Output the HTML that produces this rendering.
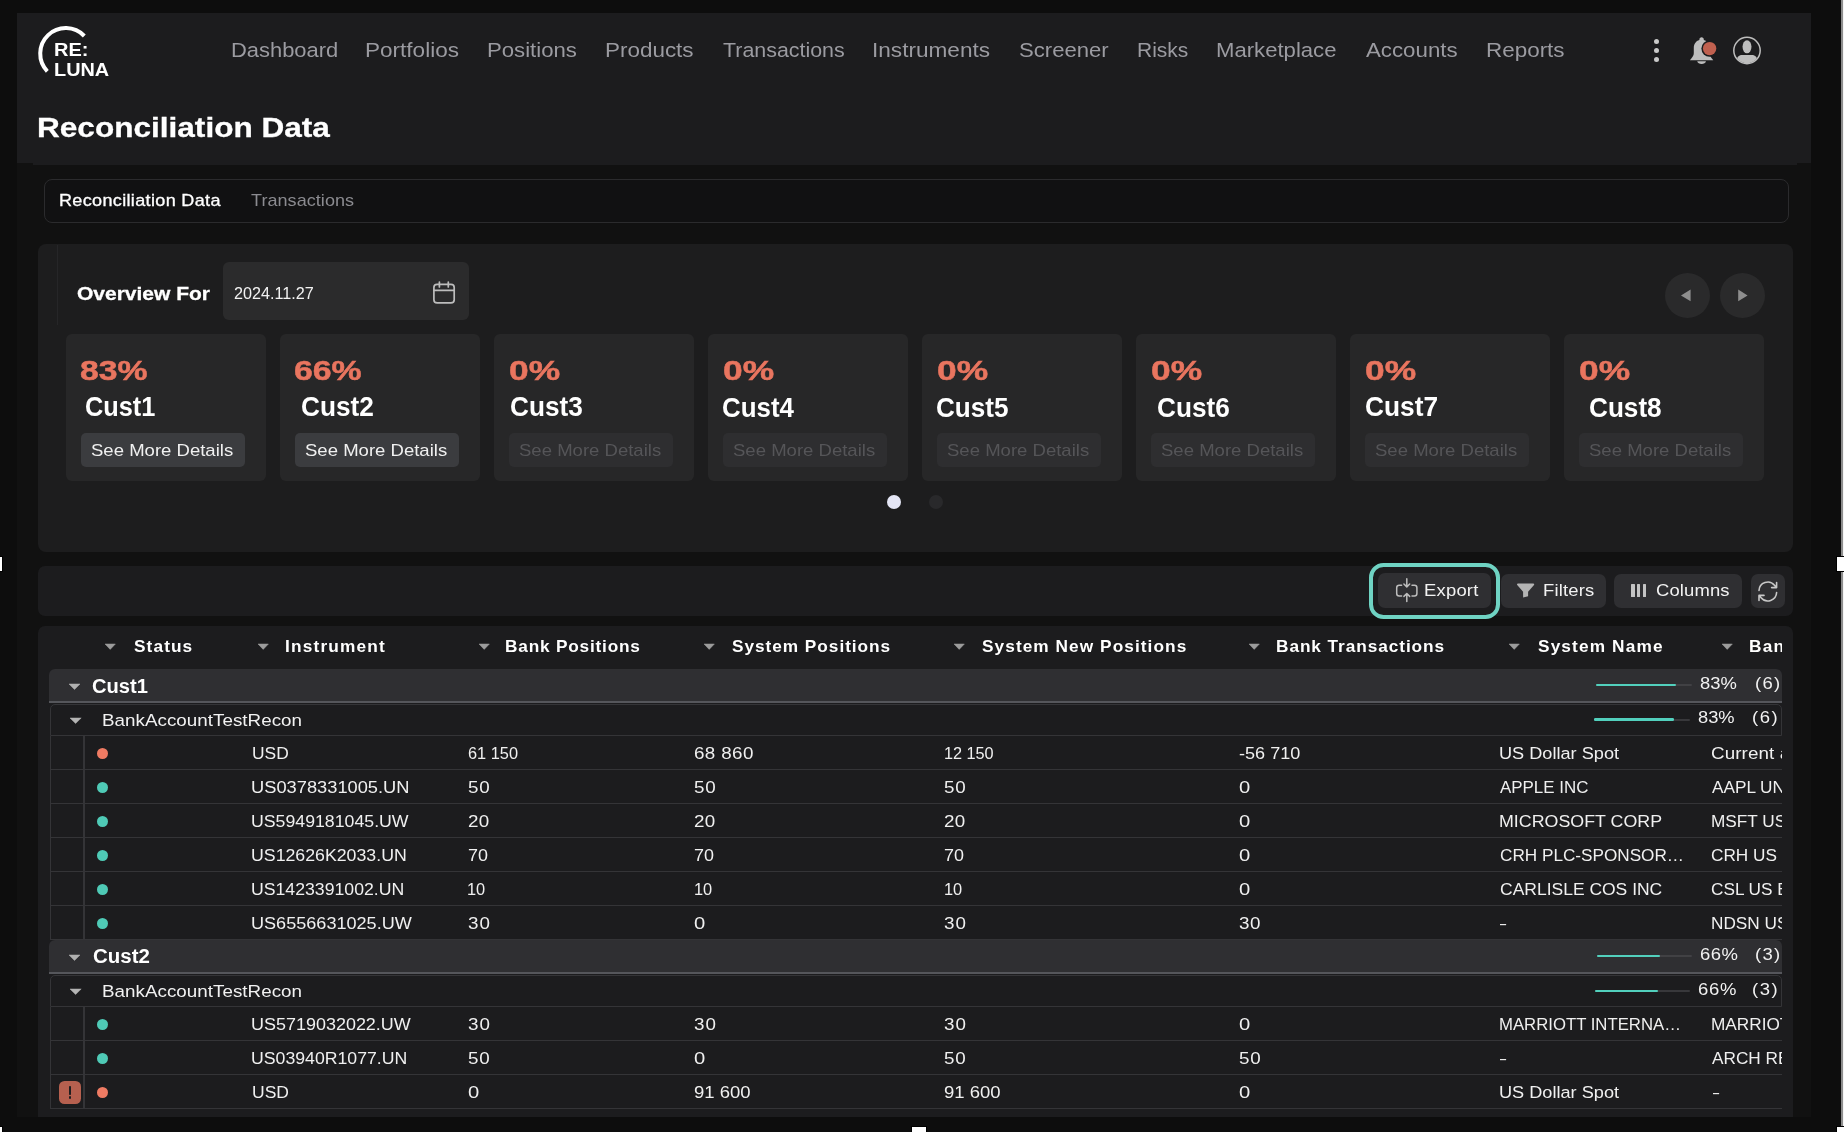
<!DOCTYPE html>
<html><head><meta charset="utf-8"><title>Reconciliation Data</title>
<style>
html,body{margin:0;padding:0;background:#0d0d0d;}
body{width:1844px;height:1132px;overflow:hidden;will-change:transform;background:#0d0d0d;font-family:"Liberation Sans",sans-serif;position:relative;}
body div,body span.t,body svg{position:absolute;}
.t{white-space:nowrap;line-height:0;display:block;transform-origin:0 0;}
.clip{overflow:hidden;}
</style></head><body>
<div style="left:17px;top:163px;width:1794px;height:954px;background:#111111;"></div>
<div style="left:17px;top:13px;width:1794px;height:150px;background:#1c1c1e;"></div>
<div style="left:33px;top:162px;width:1764px;height:2.8px;background:#1c1c1e;"></div>
<div style="left:1841px;top:0px;width:2px;height:1132px;background:#8e8e8e;"></div>
<div style="left:1843px;top:0px;width:1px;height:1132px;background:#f4f4f4;"></div>
<svg style="left:30px;top:18px" width="100" height="70" viewBox="30 18 100 70"><path d="M 84.3 36.0 A 25.3 25.3 0 0 0 47.3 71.3" fill="none" stroke="#fff" stroke-width="4"/></svg>
<span class="t" style="left:53.67px;top:50px;font-size:18.8px;font-weight:700;color:#fff;transform:scaleX(1.0630);">RE:</span>
<span class="t" style="left:53.68px;top:70px;font-size:18.8px;font-weight:700;color:#fff;transform:scaleX(1.0574);">LUNA</span>
<span class="t" style="left:230.84px;top:50px;font-size:20.5px;color:#9b9ba1;transform:scaleX(1.0693);">Dashboard</span>
<span class="t" style="left:364.99px;top:50px;font-size:20.5px;color:#9b9ba1;transform:scaleX(1.0999);">Portfolios</span>
<span class="t" style="left:487.02px;top:50px;font-size:20.5px;color:#9b9ba1;transform:scaleX(1.0810);">Positions</span>
<span class="t" style="left:604.99px;top:50px;font-size:20.5px;color:#9b9ba1;transform:scaleX(1.0948);">Products</span>
<span class="t" style="left:722.93px;top:50px;font-size:20.5px;color:#9b9ba1;transform:scaleX(1.0437);">Transactions</span>
<span class="t" style="left:871.86px;top:50px;font-size:20.5px;color:#9b9ba1;transform:scaleX(1.1028);">Instruments</span>
<span class="t" style="left:1018.83px;top:50px;font-size:20.5px;color:#9b9ba1;transform:scaleX(1.0787);">Screener</span>
<span class="t" style="left:1136.61px;top:50px;font-size:20.5px;color:#9b9ba1;transform:scaleX(1.0220);">Risks</span>
<span class="t" style="left:1216.22px;top:50px;font-size:20.5px;color:#9b9ba1;transform:scaleX(1.0788);">Marketplace</span>
<span class="t" style="left:1365.80px;top:50px;font-size:20.5px;color:#9b9ba1;transform:scaleX(1.0861);">Accounts</span>
<span class="t" style="left:1485.99px;top:50px;font-size:20.5px;color:#9b9ba1;transform:scaleX(1.0943);">Reports</span>
<div style="left:1654.15px;top:39.15px;width:4.7px;height:4.7px;background:#c9c9c9;border-radius:3px;"></div>
<div style="left:1654.15px;top:48.25px;width:4.7px;height:4.7px;background:#c9c9c9;border-radius:3px;"></div>
<div style="left:1654.15px;top:57.449999999999996px;width:4.7px;height:4.7px;background:#c9c9c9;border-radius:3px;"></div>
<svg style="left:1686px;top:34px" width="34" height="34" viewBox="1686 34 34 34">
<path d="M1701.6 37.2c-1.3 0-2.2 1-2.2 2.2v.5c-3.6 1-5.6 4.1-5.6 8v5.3c0 2.2-1.5 4.2-3.9 7h23.4c-2.4-2.8-3.9-4.8-3.9-7v-5.3c0-3.9-2-7-5.6-8v-.5c0-1.200-.9-2.200-2.200-2.200z" fill="#bdbdbd"/>
<path d="M1697.200 61.300h8.800c-.5 1.700-2.200 2.700-4.400 2.700s-3.900-1-4.400-2.700z" fill="#bdbdbd"/>
<circle cx="1709.6" cy="48.600" r="8.200" fill="#1c1c1e"/>
<circle cx="1709.6" cy="48.600" r="6.700" fill="#c0604f"/>
</svg>
<svg style="left:1730px;top:34px" width="34" height="34" viewBox="1730 34 34 34">
<defs><clipPath id="uc"><circle cx="1747" cy="50.500" r="12.600"/></clipPath></defs>
<circle cx="1747" cy="50.500" r="13.200" fill="none" stroke="#bdbdbd" stroke-width="1.500"/>
<ellipse cx="1747" cy="46.800" rx="4.500" ry="6.500" fill="#bdbdbd"/>
<path d="M1737 64 v-4.500 c0-3 2.500-4.500 5-4.500 h10 c2.500 0 5 1.500 5 4.500 v4.500z" fill="#bdbdbd" clip-path="url(#uc)"/>
</svg>
<span class="t" style="left:37.14px;top:128px;font-size:27.6px;font-weight:700;color:#fff;transform:scaleX(1.1438);-webkit-text-stroke:0.3px #fff;">Reconciliation Data</span>
<div style="left:44px;top:179px;width:1745px;height:43.5px;background:#111112;border-radius:8px;box-sizing:border-box;border:1px solid #2b2b2d;"></div>
<span class="t" style="left:59.26px;top:201px;font-size:15.7px;color:#fff;letter-spacing:0.292px;transform:scaleX(1.1500);-webkit-text-stroke:0.3px #fff;">Reconciliation Data</span>
<span class="t" style="left:250.60px;top:201px;font-size:15.7px;color:#8b8b90;letter-spacing:0.035px;transform:scaleX(1.1500);">Transactions</span>
<div style="left:38px;top:244px;width:1755px;height:307.5px;background:#1d1d1e;border-radius:8px;"></div>
<div style="left:57px;top:245px;width:1px;height:80px;background:#262628;"></div>
<span class="t" style="left:76.95px;top:294px;font-size:18.6px;font-weight:700;color:#fff;transform:scaleX(1.1288);-webkit-text-stroke:0.3px #fff;">Overview For</span>
<div style="left:222.5px;top:261.7px;width:246.5px;height:58.3px;background:#2b2b2c;border-radius:6px;"></div>
<span class="t" style="left:234.11px;top:293px;font-size:16.5px;color:#f2f2f2;transform:scaleX(0.9818);">2024.11.27</span>
<svg style="left:430px;top:279px" width="28" height="28" viewBox="430 279 28 28" fill="none" stroke="#bdbdbd" stroke-width="1.700" stroke-linecap="round">
<rect x="433.900" y="284.400" width="20.300" height="18.500" rx="3.200"/>
<path d="M433.900 290.400h20.300M439.400 282v5M448.300 282v5"/>
</svg>
<div style="left:1665.1px;top:272.8px;width:45.0px;height:45.0px;background:#2a2a2b;border-radius:23px;"></div>
<div style="left:1719.6px;top:272.8px;width:45.0px;height:45.0px;background:#2a2a2b;border-radius:23px;"></div>
<svg style="left:1660px;top:270px" width="110" height="50" viewBox="1660 270 110 50"><path d="M1681 295.400 L1690.600 289.600 V301.300z M1747.600 295.400 L1738.200 289.600 V301.300z" fill="#8e8e8e"/></svg>
<div style="left:66.2px;top:334.3px;width:200.2px;height:146.4px;background:#272728;border-radius:6px;"></div>
<span class="t" style="left:80.18px;top:371px;font-size:28px;font-weight:700;color:#e9755f;transform:scaleX(1.2037);-webkit-text-stroke:0.5px #e9755f;">83%</span>
<span class="t" style="left:85.37px;top:407px;font-size:27px;font-weight:700;color:#fff;transform:scaleX(0.9385);">Cust1</span>
<div style="left:80.60000000000001px;top:433.1px;width:164.9px;height:33.8px;background:#3b3c3f;border-radius:5px;"></div>
<span class="t" style="left:91.28px;top:451px;font-size:17px;color:#f0f0f0;transform:scaleX(1.0903);">See More Details</span>
<div style="left:280.2px;top:334.3px;width:200.2px;height:146.4px;background:#272728;border-radius:6px;"></div>
<span class="t" style="left:293.99px;top:371px;font-size:28px;font-weight:700;color:#e9755f;transform:scaleX(1.2070);-webkit-text-stroke:0.5px #e9755f;">66%</span>
<span class="t" style="left:301.33px;top:407px;font-size:27px;font-weight:700;color:#fff;transform:scaleX(0.9719);">Cust2</span>
<div style="left:294.59999999999997px;top:433.1px;width:164.9px;height:33.8px;background:#3b3c3f;border-radius:5px;"></div>
<span class="t" style="left:305.28px;top:451px;font-size:17px;color:#f0f0f0;transform:scaleX(1.0903);">See More Details</span>
<div style="left:494.2px;top:334.3px;width:200.2px;height:146.4px;background:#272728;border-radius:6px;"></div>
<span class="t" style="left:508.51px;top:371px;font-size:28px;font-weight:700;color:#e9755f;transform:scaleX(1.2626);-webkit-text-stroke:0.5px #e9755f;">0%</span>
<span class="t" style="left:509.63px;top:407px;font-size:27px;font-weight:700;color:#fff;transform:scaleX(0.9705);">Cust3</span>
<div style="left:508.59999999999997px;top:433.1px;width:164.9px;height:33.8px;background:#2e2e30;border-radius:5px;"></div>
<span class="t" style="left:519.28px;top:451px;font-size:17px;color:#555558;transform:scaleX(1.0903);">See More Details</span>
<div style="left:708.2px;top:334.3px;width:200.2px;height:146.4px;background:#272728;border-radius:6px;"></div>
<span class="t" style="left:722.51px;top:371px;font-size:28px;font-weight:700;color:#e9755f;transform:scaleX(1.2626);-webkit-text-stroke:0.5px #e9755f;">0%</span>
<span class="t" style="left:722.24px;top:408px;font-size:27px;font-weight:700;color:#fff;transform:scaleX(0.9593);">Cust4</span>
<div style="left:722.6px;top:433.1px;width:164.9px;height:33.8px;background:#2e2e30;border-radius:5px;"></div>
<span class="t" style="left:733.28px;top:451px;font-size:17px;color:#555558;transform:scaleX(1.0903);">See More Details</span>
<div style="left:922.2px;top:334.3px;width:200.2px;height:146.4px;background:#272728;border-radius:6px;"></div>
<span class="t" style="left:936.51px;top:371px;font-size:28px;font-weight:700;color:#e9755f;transform:scaleX(1.2626);-webkit-text-stroke:0.5px #e9755f;">0%</span>
<span class="t" style="left:935.84px;top:408px;font-size:27px;font-weight:700;color:#fff;transform:scaleX(0.9672);">Cust5</span>
<div style="left:936.6px;top:433.1px;width:164.9px;height:33.8px;background:#2e2e30;border-radius:5px;"></div>
<span class="t" style="left:947.28px;top:451px;font-size:17px;color:#555558;transform:scaleX(1.0903);">See More Details</span>
<div style="left:1136.2px;top:334.3px;width:200.2px;height:146.4px;background:#272728;border-radius:6px;"></div>
<span class="t" style="left:1150.51px;top:371px;font-size:28px;font-weight:700;color:#e9755f;transform:scaleX(1.2626);-webkit-text-stroke:0.5px #e9755f;">0%</span>
<span class="t" style="left:1157.33px;top:408px;font-size:27px;font-weight:700;color:#fff;transform:scaleX(0.9705);">Cust6</span>
<div style="left:1150.6000000000001px;top:433.1px;width:164.9px;height:33.8px;background:#2e2e30;border-radius:5px;"></div>
<span class="t" style="left:1161.28px;top:451px;font-size:17px;color:#555558;transform:scaleX(1.0903);">See More Details</span>
<div style="left:1350.2px;top:334.3px;width:200.2px;height:146.4px;background:#272728;border-radius:6px;"></div>
<span class="t" style="left:1364.51px;top:371px;font-size:28px;font-weight:700;color:#e9755f;transform:scaleX(1.2626);-webkit-text-stroke:0.5px #e9755f;">0%</span>
<span class="t" style="left:1365.33px;top:407px;font-size:27px;font-weight:700;color:#fff;transform:scaleX(0.9732);">Cust7</span>
<div style="left:1364.6000000000001px;top:433.1px;width:164.9px;height:33.8px;background:#2e2e30;border-radius:5px;"></div>
<span class="t" style="left:1375.28px;top:451px;font-size:17px;color:#555558;transform:scaleX(1.0903);">See More Details</span>
<div style="left:1564.2px;top:334.3px;width:200.2px;height:146.4px;background:#272728;border-radius:6px;"></div>
<span class="t" style="left:1578.51px;top:371px;font-size:28px;font-weight:700;color:#e9755f;transform:scaleX(1.2626);-webkit-text-stroke:0.5px #e9755f;">0%</span>
<span class="t" style="left:1589.33px;top:408px;font-size:27px;font-weight:700;color:#fff;transform:scaleX(0.9685);">Cust8</span>
<div style="left:1578.6000000000001px;top:433.1px;width:164.9px;height:33.8px;background:#2e2e30;border-radius:5px;"></div>
<span class="t" style="left:1589.28px;top:451px;font-size:17px;color:#555558;transform:scaleX(1.0903);">See More Details</span>
<div style="left:887px;top:495.1px;width:14px;height:14.0px;background:#e4e6f5;border-radius:7px;"></div>
<div style="left:929.2px;top:495.1px;width:14.0px;height:14.0px;background:#29292b;border-radius:7px;"></div>
<div style="left:38px;top:566px;width:1755px;height:50.4px;background:#1c1c1e;border-radius:7px;"></div>
<div style="left:1369px;top:563px;width:131.3px;height:55.8px;background:#1c1c1e;border-radius:14.5px;box-sizing:border-box;border:4.8px solid #6fd3c3;"></div>
<div style="left:1378.2px;top:572.8px;width:112.6px;height:35.5px;background:#2f2f32;border-radius:7px;"></div>
<div style="left:1501.4px;top:574.3px;width:104.6px;height:34.0px;background:#2f2f32;border-radius:7px;"></div>
<div style="left:1614.1px;top:574.3px;width:128.0px;height:34.0px;background:#2f2f32;border-radius:7px;"></div>
<div style="left:1751px;top:574.3px;width:33.8px;height:34.0px;background:#2f2f32;border-radius:7px;"></div>
<svg style="left:1392px;top:575px" width="30" height="30" viewBox="1392 575 30 30" fill="none" stroke="#bdbdbd" stroke-width="1.500" stroke-linecap="round" stroke-linejoin="round">
<path d="M1401.600 585.300h-2.400a2.500 2.500 0 0 0-2.500 2.500v5.600a2.500 2.500 0 0 0 2.500 2.500h2.400M1412 585.300h2.400a2.500 2.500 0 0 1 2.500 2.500v5.600a2.500 2.500 0 0 1-2.500 2.500h-2.400"/>
<path d="M1406.800 578.700v8.000M1403.900 584.000l2.900 2.900 2.900-2.900M1406.800 601.600v-8.000M1403.900 596.400l2.900-2.900 2.900 2.900"/>
</svg>
<span class="t" style="left:1423.99px;top:591px;font-size:15.9px;color:#f2f2f2;letter-spacing:0.183px;transform:scaleX(1.1600);">Export</span>
<svg style="left:1514px;top:580px" width="24" height="22" viewBox="1514 580 24 22"><path d="M1517.800 583.600h15.600a.8.8 0 0 1 .6 1.300l-5.900 6.800v4.600l-5 1.200v-5.800l-5.900-6.800a.8.8 0 0 1 .6-1.300z" fill="#b4b4b4"/></svg>
<span class="t" style="left:1542.69px;top:591px;font-size:15.9px;color:#f2f2f2;letter-spacing:0.161px;transform:scaleX(1.1600);">Filters</span>
<div style="left:1631.4px;top:583.7px;width:3.4px;height:13.7px;background:#c4c4c4;border-radius:0.5px;"></div>
<div style="left:1637.1px;top:583.7px;width:3.4px;height:13.7px;background:#c4c4c4;border-radius:0.5px;"></div>
<div style="left:1642.8px;top:583.7px;width:3.4px;height:13.7px;background:#c4c4c4;border-radius:0.5px;"></div>
<span class="t" style="left:1656.27px;top:591px;font-size:15.9px;color:#f2f2f2;letter-spacing:0.111px;transform:scaleX(1.1600);">Columns</span>
<svg style="left:1755px;top:579px" width="26" height="26" viewBox="1755 579 26 26" fill="none" stroke="#c8c8c8" stroke-width="1.600" stroke-linecap="round" stroke-linejoin="round">
<path d="M1759 590.500a8.800 8.800 0 0 1 15.500-5.300l2 2.300M1776.600 582.600v5h-5"/>
<path d="M1776.600 592.500a8.800 8.800 0 0 1-15.500 5.300l-2-2.300M1759 600.400v-5h5"/>
</svg>
<div style="left:38.3px;top:625.6px;width:1754.7px;height:491.4px;background:#1c1c1e;border-radius:7px 7px 0 0;"></div>
<div class="clip" style="left:0;top:0;width:1782px;height:1132px">
<svg style="left:104.40px;top:643.20px" width="12.4" height="7.4" viewBox="-1 -1 12.4 7.4"><path d="M0 0H10.4L5.2 5.4z" fill="#9c9c9c" stroke="#9c9c9c" stroke-width="0.500" stroke-linejoin="round"/></svg>
<span class="t" style="left:134.23px;top:647px;font-size:16.6px;font-weight:700;color:#fff;letter-spacing:1.051px;transform:scaleX(1.0400);">Status</span>
<svg style="left:257.00px;top:643.20px" width="12.4" height="7.4" viewBox="-1 -1 12.4 7.4"><path d="M0 0H10.4L5.2 5.4z" fill="#9c9c9c" stroke="#9c9c9c" stroke-width="0.500" stroke-linejoin="round"/></svg>
<span class="t" style="left:284.96px;top:647px;font-size:16.6px;font-weight:700;color:#fff;letter-spacing:1.135px;transform:scaleX(1.0400);">Instrument</span>
<svg style="left:478.20px;top:643.20px" width="12.4" height="7.4" viewBox="-1 -1 12.4 7.4"><path d="M0 0H10.4L5.2 5.4z" fill="#9c9c9c" stroke="#9c9c9c" stroke-width="0.500" stroke-linejoin="round"/></svg>
<span class="t" style="left:504.86px;top:647px;font-size:16.6px;font-weight:700;color:#fff;letter-spacing:0.760px;transform:scaleX(1.0400);">Bank Positions</span>
<svg style="left:703.40px;top:643.20px" width="12.4" height="7.4" viewBox="-1 -1 12.4 7.4"><path d="M0 0H10.4L5.2 5.4z" fill="#9c9c9c" stroke="#9c9c9c" stroke-width="0.500" stroke-linejoin="round"/></svg>
<span class="t" style="left:731.83px;top:647px;font-size:16.6px;font-weight:700;color:#fff;letter-spacing:0.917px;transform:scaleX(1.0400);">System Positions</span>
<svg style="left:952.50px;top:643.20px" width="12.4" height="7.4" viewBox="-1 -1 12.4 7.4"><path d="M0 0H10.4L5.2 5.4z" fill="#9c9c9c" stroke="#9c9c9c" stroke-width="0.500" stroke-linejoin="round"/></svg>
<span class="t" style="left:982.33px;top:647px;font-size:16.6px;font-weight:700;color:#fff;letter-spacing:1.018px;transform:scaleX(1.0400);">System New Positions</span>
<svg style="left:1248.00px;top:643.20px" width="12.4" height="7.4" viewBox="-1 -1 12.4 7.4"><path d="M0 0H10.4L5.2 5.4z" fill="#9c9c9c" stroke="#9c9c9c" stroke-width="0.500" stroke-linejoin="round"/></svg>
<span class="t" style="left:1276.46px;top:647px;font-size:16.6px;font-weight:700;color:#fff;letter-spacing:0.881px;transform:scaleX(1.0400);">Bank Transactions</span>
<svg style="left:1508.00px;top:643.20px" width="12.4" height="7.4" viewBox="-1 -1 12.4 7.4"><path d="M0 0H10.4L5.2 5.4z" fill="#9c9c9c" stroke="#9c9c9c" stroke-width="0.500" stroke-linejoin="round"/></svg>
<span class="t" style="left:1537.53px;top:647px;font-size:16.6px;font-weight:700;color:#fff;letter-spacing:1.085px;transform:scaleX(1.0400);">System Name</span>
<svg style="left:1721.00px;top:643.20px" width="12.4" height="7.4" viewBox="-1 -1 12.4 7.4"><path d="M0 0H10.4L5.2 5.4z" fill="#9c9c9c" stroke="#9c9c9c" stroke-width="0.500" stroke-linejoin="round"/></svg>
<span class="t" style="left:1748.56px;top:647px;font-size:16.6px;font-weight:700;color:#fff;letter-spacing:1.200px;transform:scaleX(1.0400);">Bank Name</span>
<div style="left:49px;top:669px;width:1733px;height:31.6px;background:#2f2f32;border-radius:6px 6px 0 0;"></div>
<div style="left:49px;top:700.6px;width:1733px;height:2.1px;background:#55565b;"></div>
<svg style="left:67.60px;top:682.50px" width="13" height="7.5" viewBox="-1 -1 13 7.5"><path d="M0 0H11L5.5 5.5z" fill="#b0b0b0" stroke="#b0b0b0" stroke-width="0.500" stroke-linejoin="round"/></svg>
<span class="t" style="left:92.01px;top:686px;font-size:20.3px;font-weight:700;color:#fff;transform:scaleX(0.9918);">Cust1</span>
<div style="left:1596.3px;top:684.2px;width:96.0px;height:2.0px;background:#414144;border-radius:1px;"></div>
<div style="left:1596.3px;top:684.0px;width:79.97px;height:2.4px;background:#52d0bd;border-radius:1.2px;"></div>
<span class="t" style="left:1699.62px;top:683px;font-size:16.5px;color:#f2f2f2;transform:scaleX(1.1150);">83%</span>
<span class="t" style="left:1754.68px;top:683px;font-size:16.5px;color:#f2f2f2;letter-spacing:1.148px;transform:scaleX(1.1200);">(6)</span>
<div style="left:50.2px;top:704.2px;width:1731.8px;height:31.8px;background:transparent;box-sizing:border-box;border:1.2px solid #343437;border-radius:5px 5px 0 0;"></div>
<svg style="left:69.10px;top:716.60px" width="13.2" height="7.5" viewBox="-1 -1 13.2 7.5"><path d="M0 0H11.2L5.6 5.5z" fill="#b4b4b4" stroke="#b4b4b4" stroke-width="0.500" stroke-linejoin="round"/></svg>
<span class="t" style="left:101.89px;top:721px;font-size:16.8px;color:#f2f2f2;letter-spacing:0.023px;transform:scaleX(1.1200);">BankAccountTestRecon</span>
<div style="left:1594px;top:718.6px;width:96px;height:2.0px;background:#38383b;border-radius:1px;"></div>
<div style="left:1594px;top:718.4000000000001px;width:79.97px;height:2.4px;background:#52d0bd;border-radius:1.2px;"></div>
<span class="t" style="left:1697.62px;top:717px;font-size:16.5px;color:#f2f2f2;transform:scaleX(1.1087);">83%</span>
<span class="t" style="left:1752.18px;top:717px;font-size:16.5px;color:#f2f2f2;letter-spacing:1.371px;transform:scaleX(1.1200);">(6)</span>
<div style="left:50.2px;top:735.8px;width:1.2px;height:204.0px;background:#343437;"></div>
<div style="left:83.2px;top:735.8px;width:1.6px;height:204.0px;background:#343437;"></div>
<div style="left:50.2px;top:768.8px;width:1731.8px;height:1.2px;background:#343437;"></div>
<div style="left:96.60000000000001px;top:747.8px;width:11.2px;height:11.2px;background:#ef7b63;border-radius:6px;"></div>
<span class="t" style="left:251.50px;top:754px;font-size:16.8px;color:#f0f0f0;transform:scaleX(1.0374);">USD</span>
<span class="t" style="left:467.77px;top:754px;font-size:16.8px;color:#f0f0f0;transform:scaleX(0.9739);">61 150</span>
<span class="t" style="left:693.95px;top:754px;font-size:16.8px;color:#f0f0f0;letter-spacing:0.341px;transform:scaleX(1.1200);">68 860</span>
<span class="t" style="left:943.59px;top:754px;font-size:16.8px;color:#f0f0f0;letter-spacing:-0.044px;transform:scaleX(0.9700);">12 150</span>
<span class="t" style="left:1239.15px;top:754px;font-size:16.8px;color:#f0f0f0;transform:scaleX(1.0764);">-56 710</span>
<span class="t" style="left:1499.05px;top:754px;font-size:16.8px;color:#f0f0f0;transform:scaleX(1.0815);">US Dollar Spot</span>
<span class="t" style="left:1711.35px;top:754px;font-size:16.8px;color:#f0f0f0;letter-spacing:0.100px;transform:scaleX(1.1200);">Current account</span>
<div style="left:50.2px;top:802.8px;width:1731.8px;height:1.2px;background:#343437;"></div>
<div style="left:96.60000000000001px;top:781.8px;width:11.2px;height:11.2px;background:#4fcab6;border-radius:6px;"></div>
<span class="t" style="left:251.44px;top:788px;font-size:16.8px;color:#f0f0f0;transform:scaleX(1.0891);">US0378331005.UN</span>
<span class="t" style="left:467.87px;top:788px;font-size:16.8px;color:#f0f0f0;letter-spacing:0.814px;transform:scaleX(1.1200);">50</span>
<span class="t" style="left:694.17px;top:788px;font-size:16.8px;color:#f0f0f0;letter-spacing:0.814px;transform:scaleX(1.1200);">50</span>
<span class="t" style="left:944.07px;top:788px;font-size:16.8px;color:#f0f0f0;letter-spacing:0.814px;transform:scaleX(1.1200);">50</span>
<span class="t" style="left:1239.12px;top:788px;font-size:16.8px;color:#f0f0f0;transform:scaleX(1.2050);">0</span>
<span class="t" style="left:1500.40px;top:788px;font-size:16.8px;color:#f0f0f0;transform:scaleX(1.0086);">APPLE INC</span>
<span class="t" style="left:1712.30px;top:788px;font-size:16.8px;color:#f0f0f0;transform:scaleX(1.0250);">AAPL UN Equity</span>
<div style="left:50.2px;top:836.8px;width:1731.8px;height:1.2px;background:#343437;"></div>
<div style="left:96.60000000000001px;top:815.8px;width:11.2px;height:11.2px;background:#4fcab6;border-radius:6px;"></div>
<span class="t" style="left:251.48px;top:822px;font-size:16.8px;color:#f0f0f0;transform:scaleX(1.0557);">US5949181045.UW</span>
<span class="t" style="left:467.70px;top:822px;font-size:16.8px;color:#f0f0f0;letter-spacing:0.250px;transform:scaleX(1.1200);">20</span>
<span class="t" style="left:694.00px;top:822px;font-size:16.8px;color:#f0f0f0;letter-spacing:0.250px;transform:scaleX(1.1200);">20</span>
<span class="t" style="left:943.90px;top:822px;font-size:16.8px;color:#f0f0f0;letter-spacing:0.250px;transform:scaleX(1.1200);">20</span>
<span class="t" style="left:1239.12px;top:822px;font-size:16.8px;color:#f0f0f0;transform:scaleX(1.2050);">0</span>
<span class="t" style="left:1498.97px;top:822px;font-size:16.8px;color:#f0f0f0;transform:scaleX(1.0620);">MICROSOFT CORP</span>
<span class="t" style="left:1710.92px;top:822px;font-size:16.8px;color:#f0f0f0;transform:scaleX(1.0250);">MSFT US Equity</span>
<div style="left:50.2px;top:870.8px;width:1731.8px;height:1.2px;background:#343437;"></div>
<div style="left:96.60000000000001px;top:849.8px;width:11.2px;height:11.2px;background:#4fcab6;border-radius:6px;"></div>
<span class="t" style="left:251.48px;top:856px;font-size:16.8px;color:#f0f0f0;transform:scaleX(1.0566);">US12626K2033.UN</span>
<span class="t" style="left:467.69px;top:856px;font-size:16.8px;color:#f0f0f0;transform:scaleX(1.0698);">70</span>
<span class="t" style="left:693.99px;top:856px;font-size:16.8px;color:#f0f0f0;transform:scaleX(1.0698);">70</span>
<span class="t" style="left:943.89px;top:856px;font-size:16.8px;color:#f0f0f0;transform:scaleX(1.0698);">70</span>
<span class="t" style="left:1239.12px;top:856px;font-size:16.8px;color:#f0f0f0;transform:scaleX(1.2050);">0</span>
<span class="t" style="left:1499.53px;top:856px;font-size:16.8px;color:#f0f0f0;transform:scaleX(1.0223);">CRH PLC-SPONSOR…</span>
<span class="t" style="left:1711.43px;top:856px;font-size:16.8px;color:#f0f0f0;transform:scaleX(1.0250);">CRH US Equity</span>
<div style="left:50.2px;top:904.8px;width:1731.8px;height:1.2px;background:#343437;"></div>
<div style="left:96.60000000000001px;top:883.8px;width:11.2px;height:11.2px;background:#4fcab6;border-radius:6px;"></div>
<span class="t" style="left:251.48px;top:890px;font-size:16.8px;color:#f0f0f0;transform:scaleX(1.0527);">US1423391002.UN</span>
<span class="t" style="left:467.38px;top:890px;font-size:16.8px;color:#f0f0f0;transform:scaleX(0.9762);">10</span>
<span class="t" style="left:693.68px;top:890px;font-size:16.8px;color:#f0f0f0;transform:scaleX(0.9762);">10</span>
<span class="t" style="left:943.58px;top:890px;font-size:16.8px;color:#f0f0f0;transform:scaleX(0.9762);">10</span>
<span class="t" style="left:1239.12px;top:890px;font-size:16.8px;color:#f0f0f0;transform:scaleX(1.2050);">0</span>
<span class="t" style="left:1499.51px;top:890px;font-size:16.8px;color:#f0f0f0;transform:scaleX(1.0418);">CARLISLE COS INC</span>
<span class="t" style="left:1711.43px;top:890px;font-size:16.8px;color:#f0f0f0;transform:scaleX(1.0250);">CSL US Equity</span>
<div style="left:50.2px;top:938.8px;width:1731.8px;height:1.2px;background:#343437;"></div>
<div style="left:96.60000000000001px;top:917.8px;width:11.2px;height:11.2px;background:#4fcab6;border-radius:6px;"></div>
<span class="t" style="left:251.45px;top:924px;font-size:16.8px;color:#f0f0f0;transform:scaleX(1.0773);">US6556631025.UW</span>
<span class="t" style="left:467.93px;top:924px;font-size:16.8px;color:#f0f0f0;letter-spacing:1.032px;transform:scaleX(1.1200);">30</span>
<span class="t" style="left:694.12px;top:924px;font-size:16.8px;color:#f0f0f0;transform:scaleX(1.2050);">0</span>
<span class="t" style="left:944.13px;top:924px;font-size:16.8px;color:#f0f0f0;letter-spacing:1.032px;transform:scaleX(1.1200);">30</span>
<span class="t" style="left:1239.23px;top:924px;font-size:16.8px;color:#f0f0f0;letter-spacing:0.407px;transform:scaleX(1.1200);">30</span>
<span class="t" style="left:1500.40px;top:924px;font-size:16.8px;color:#f0f0f0;transform:scaleX(0.6524);">–</span>
<span class="t" style="left:1710.92px;top:924px;font-size:16.8px;color:#f0f0f0;transform:scaleX(1.0250);">NDSN US Equity</span>
<div style="left:49px;top:940.1px;width:1733px;height:31.6px;background:#2f2f32;border-radius:6px 6px 0 0;"></div>
<div style="left:49px;top:971.7px;width:1733px;height:2.1px;background:#55565b;"></div>
<svg style="left:67.60px;top:953.60px" width="13" height="7.5" viewBox="-1 -1 13 7.5"><path d="M0 0H11L5.5 5.5z" fill="#b0b0b0" stroke="#b0b0b0" stroke-width="0.500" stroke-linejoin="round"/></svg>
<span class="t" style="left:92.79px;top:956px;font-size:20.3px;font-weight:700;color:#fff;transform:scaleX(1.0091);">Cust2</span>
<div style="left:1596.9px;top:955.3000000000001px;width:95.6px;height:2.0px;background:#414144;border-radius:1px;"></div>
<div style="left:1596.9px;top:955.1px;width:63.38px;height:2.4px;background:#52d0bd;border-radius:1.2px;"></div>
<span class="t" style="left:1699.80px;top:954px;font-size:16.5px;color:#f2f2f2;letter-spacing:0.425px;transform:scaleX(1.1200);">66%</span>
<span class="t" style="left:1754.98px;top:954px;font-size:16.5px;color:#f2f2f2;letter-spacing:1.104px;transform:scaleX(1.1200);">(3)</span>
<div style="left:50.2px;top:975.4px;width:1731.8px;height:31.8px;background:transparent;box-sizing:border-box;border:1.2px solid #343437;border-radius:5px 5px 0 0;"></div>
<svg style="left:69.10px;top:987.80px" width="13.2" height="7.5" viewBox="-1 -1 13.2 7.5"><path d="M0 0H11.2L5.6 5.5z" fill="#b4b4b4" stroke="#b4b4b4" stroke-width="0.500" stroke-linejoin="round"/></svg>
<span class="t" style="left:101.89px;top:992px;font-size:16.8px;color:#f2f2f2;letter-spacing:0.023px;transform:scaleX(1.1200);">BankAccountTestRecon</span>
<div style="left:1595px;top:989.8px;width:95.3px;height:2.0px;background:#38383b;border-radius:1px;"></div>
<div style="left:1595px;top:989.6px;width:63.18px;height:2.4px;background:#52d0bd;border-radius:1.2px;"></div>
<span class="t" style="left:1697.60px;top:989px;font-size:16.5px;color:#f2f2f2;letter-spacing:0.693px;transform:scaleX(1.1200);">66%</span>
<span class="t" style="left:1752.48px;top:989px;font-size:16.5px;color:#f2f2f2;letter-spacing:1.371px;transform:scaleX(1.1200);">(3)</span>
<div style="left:50.2px;top:1007.0px;width:1.2px;height:102.0px;background:#343437;"></div>
<div style="left:83.2px;top:1007.0px;width:1.6px;height:102.0px;background:#343437;"></div>
<div style="left:50.2px;top:1040.0px;width:1731.8px;height:1.2px;background:#343437;"></div>
<div style="left:96.60000000000001px;top:1018.9999999999999px;width:11.2px;height:11.2px;background:#4fcab6;border-radius:6px;"></div>
<span class="t" style="left:251.46px;top:1025px;font-size:16.8px;color:#f0f0f0;transform:scaleX(1.0705);">US5719032022.UW</span>
<span class="t" style="left:467.93px;top:1025px;font-size:16.8px;color:#f0f0f0;letter-spacing:1.032px;transform:scaleX(1.1200);">30</span>
<span class="t" style="left:694.23px;top:1025px;font-size:16.8px;color:#f0f0f0;letter-spacing:1.032px;transform:scaleX(1.1200);">30</span>
<span class="t" style="left:944.13px;top:1025px;font-size:16.8px;color:#f0f0f0;letter-spacing:1.032px;transform:scaleX(1.1200);">30</span>
<span class="t" style="left:1239.12px;top:1025px;font-size:16.8px;color:#f0f0f0;transform:scaleX(1.2050);">0</span>
<span class="t" style="left:1499.05px;top:1025px;font-size:16.8px;color:#f0f0f0;transform:scaleX(0.9969);">MARRIOTT INTERNA…</span>
<span class="t" style="left:1710.92px;top:1025px;font-size:16.8px;color:#f0f0f0;transform:scaleX(1.0250);">MARRIOTT INTL</span>
<div style="left:50.2px;top:1074.0px;width:1731.8px;height:1.2px;background:#343437;"></div>
<div style="left:96.60000000000001px;top:1053.0px;width:11.2px;height:11.2px;background:#4fcab6;border-radius:6px;"></div>
<span class="t" style="left:251.48px;top:1059px;font-size:16.8px;color:#f0f0f0;transform:scaleX(1.0535);">US03940R1077.UN</span>
<span class="t" style="left:467.87px;top:1059px;font-size:16.8px;color:#f0f0f0;letter-spacing:0.814px;transform:scaleX(1.1200);">50</span>
<span class="t" style="left:694.12px;top:1059px;font-size:16.8px;color:#f0f0f0;transform:scaleX(1.2050);">0</span>
<span class="t" style="left:944.07px;top:1059px;font-size:16.8px;color:#f0f0f0;letter-spacing:0.814px;transform:scaleX(1.1200);">50</span>
<span class="t" style="left:1239.17px;top:1059px;font-size:16.8px;color:#f0f0f0;letter-spacing:0.814px;transform:scaleX(1.1200);">50</span>
<span class="t" style="left:1500.40px;top:1059px;font-size:16.8px;color:#f0f0f0;transform:scaleX(0.6524);">–</span>
<span class="t" style="left:1712.30px;top:1059px;font-size:16.8px;color:#f0f0f0;transform:scaleX(1.0250);">ARCH RESOURCES</span>
<div style="left:50.2px;top:1108.0px;width:1731.8px;height:1.2px;background:#343437;"></div>
<div style="left:96.60000000000001px;top:1087.0px;width:11.2px;height:11.2px;background:#ef7b63;border-radius:6px;"></div>
<span class="t" style="left:251.50px;top:1093px;font-size:16.8px;color:#f0f0f0;transform:scaleX(1.0433);">USD</span>
<span class="t" style="left:467.82px;top:1093px;font-size:16.8px;color:#f0f0f0;transform:scaleX(1.2050);">0</span>
<span class="t" style="left:694.07px;top:1093px;font-size:16.8px;color:#f0f0f0;transform:scaleX(1.1040);">91 600</span>
<span class="t" style="left:943.97px;top:1093px;font-size:16.8px;color:#f0f0f0;transform:scaleX(1.1040);">91 600</span>
<span class="t" style="left:1239.12px;top:1093px;font-size:16.8px;color:#f0f0f0;transform:scaleX(1.2050);">0</span>
<span class="t" style="left:1499.05px;top:1093px;font-size:16.8px;color:#f0f0f0;transform:scaleX(1.0815);">US Dollar Spot</span>
<span class="t" style="left:1712.70px;top:1093px;font-size:16.8px;color:#f0f0f0;transform:scaleX(0.6524);">–</span>
<div style="left:59px;top:1080.8px;width:22.1px;height:23.4px;background:#b6604f;border-radius:5.5px;"></div>
<div style="left:69.2px;top:1085.8px;width:1.7px;height:9.4px;background:#1e1e20;border-radius:0.8px;"></div>
<div style="left:68.7px;top:1096.0px;width:2.6px;height:2.6px;background:#1e1e20;border-radius:1.3px;"></div>
</div>
<div style="left:-3px;top:556px;width:6px;height:16px;background:#000;"></div>
<div style="left:-2px;top:557px;width:4px;height:14px;background:#fff;"></div>
<div style="left:1836px;top:556px;width:11px;height:16px;background:#000;"></div>
<div style="left:1837px;top:557px;width:9px;height:14px;background:#fff;"></div>
<div style="left:911px;top:1126px;width:16px;height:11px;background:#000;"></div>
<div style="left:912px;top:1127px;width:14px;height:9px;background:#fff;"></div>
<div style="left:-3px;top:1125.5px;width:6px;height:11.5px;background:#000;"></div>
<div style="left:-2px;top:1126.5px;width:4px;height:9.5px;background:#fff;"></div>
<div style="left:1836px;top:1126px;width:11px;height:11px;background:#000;"></div>
<div style="left:1837px;top:1127px;width:9px;height:9px;background:#fff;"></div>
</body></html>
